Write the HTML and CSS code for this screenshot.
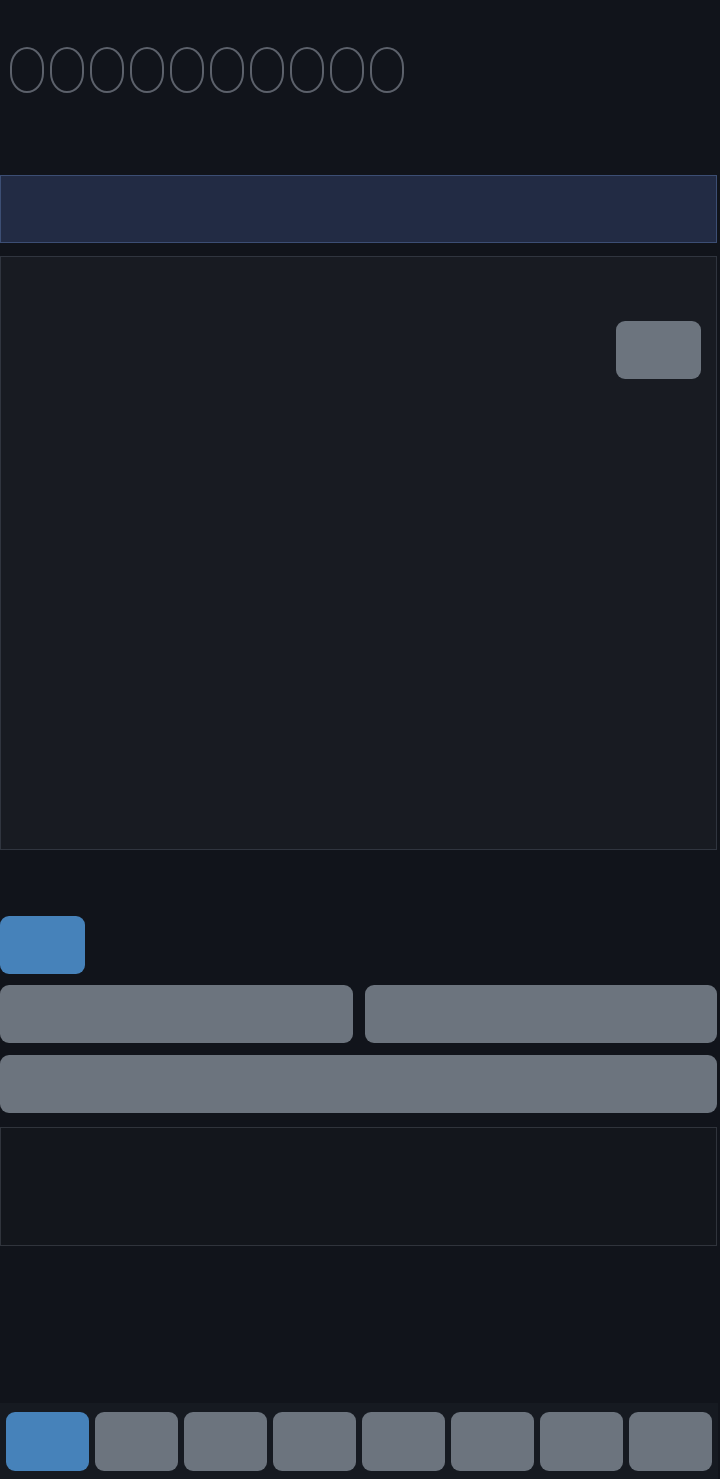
FILE: index.html
```html
<!DOCTYPE html>
<html lang="en">
<head>
  <meta charset="UTF-8" />
  <meta name="viewport" content="width=device-width, initial-scale=1.0"/>
  <title>Code Entry</title>
  <link rel="stylesheet" href="styles.css">
</head>
<body>

  <div class="app">
    <div class="digits">
      <span class="digit"></span>
      <span class="digit"></span>
      <span class="digit"></span>
      <span class="digit"></span>
      <span class="digit"></span>
      <span class="digit"></span>
      <span class="digit"></span>
      <span class="digit"></span>
      <span class="digit"></span>
      <span class="digit"></span>
    </div>

    <div class="banner"></div>

    <div class="panel">
      <button class="btn small"></button>
    </div>

    <div class="actions">
      <button class="btn primary"></button>
      <div class="pair">
        <button class="btn"></button>
        <button class="btn"></button>
      </div>
      <button class="btn wide"></button>
    </div>

    <div class="log"></div>
  </div>

  <nav class="tabbar">
    <button class="tab active"></button>
    <button class="tab"></button>
    <button class="tab"></button>
    <button class="tab"></button>
    <button class="tab"></button>
    <button class="tab"></button>
    <button class="tab"></button>
    <button class="tab"></button>
  </nav>

</body>
</html>
```

FILE: styles.css
```css
body {
  margin: 0;
  padding: 0;
  font-family: "Noto Sans", Roboto, sans-serif;
  background: #11141b;
  height: 100vh;
  overflow: hidden;
}

.app {
  width: 717px;
  display: flex;
  flex-direction: column;
}

.digits {
  display: flex;
  gap: 6px;
  padding: 47px 0 0 10px;
  height: 175px;
  box-sizing: border-box;
  flex-shrink: 0;
}

.digit {
  width: 34px;
  height: 46px;
  border: 2px solid #5c616b;
  border-radius: 17px / 20px;
  box-sizing: border-box;
}

.banner {
  height: 68px;
  background: #222b44;
  border: 1px solid #3c4e74;
  box-sizing: border-box;
  flex-shrink: 0;
}

.panel {
  margin-top: 13px;
  height: 594px;
  background: #181b22;
  border: 1px solid #30353f;
  box-sizing: border-box;
  display: flex;
  justify-content: flex-end;
  align-items: flex-start;
  padding: 64px 15px 0 0;
  flex-shrink: 0;
}

button {
  border: none;
  padding: 0;
  height: 58px;
  border-radius: 9px;
  background: #6c747e;
  cursor: pointer;
}

.btn.small {
  width: 85px;
}

.actions {
  margin-top: 66px;
  display: flex;
  flex-direction: column;
  gap: 11px;
}

.btn.primary {
  width: 85px;
  background: #4682ba;
}

.btn.wide {
  margin-top: 1px;
}

.pair {
  display: grid;
  grid-template-columns: 1fr 1fr;
  gap: 12px;
}

.log {
  margin-top: 14px;
  height: 119px;
  background: #13161c;
  border: 1px solid #30343c;
  box-sizing: border-box;
  flex-shrink: 0;
}

.tabbar {
  position: fixed;
  left: 0;
  bottom: 0;
  width: 718px;
  height: 76px;
  box-sizing: border-box;
  padding: 9px 6px 0;
  background: #161a21;
  display: flex;
  gap: 6px;
  align-items: flex-start;
}

.tab {
  flex: 1;
  height: 59px;
}

.tab.active {
  background: #4682ba;
}
```
